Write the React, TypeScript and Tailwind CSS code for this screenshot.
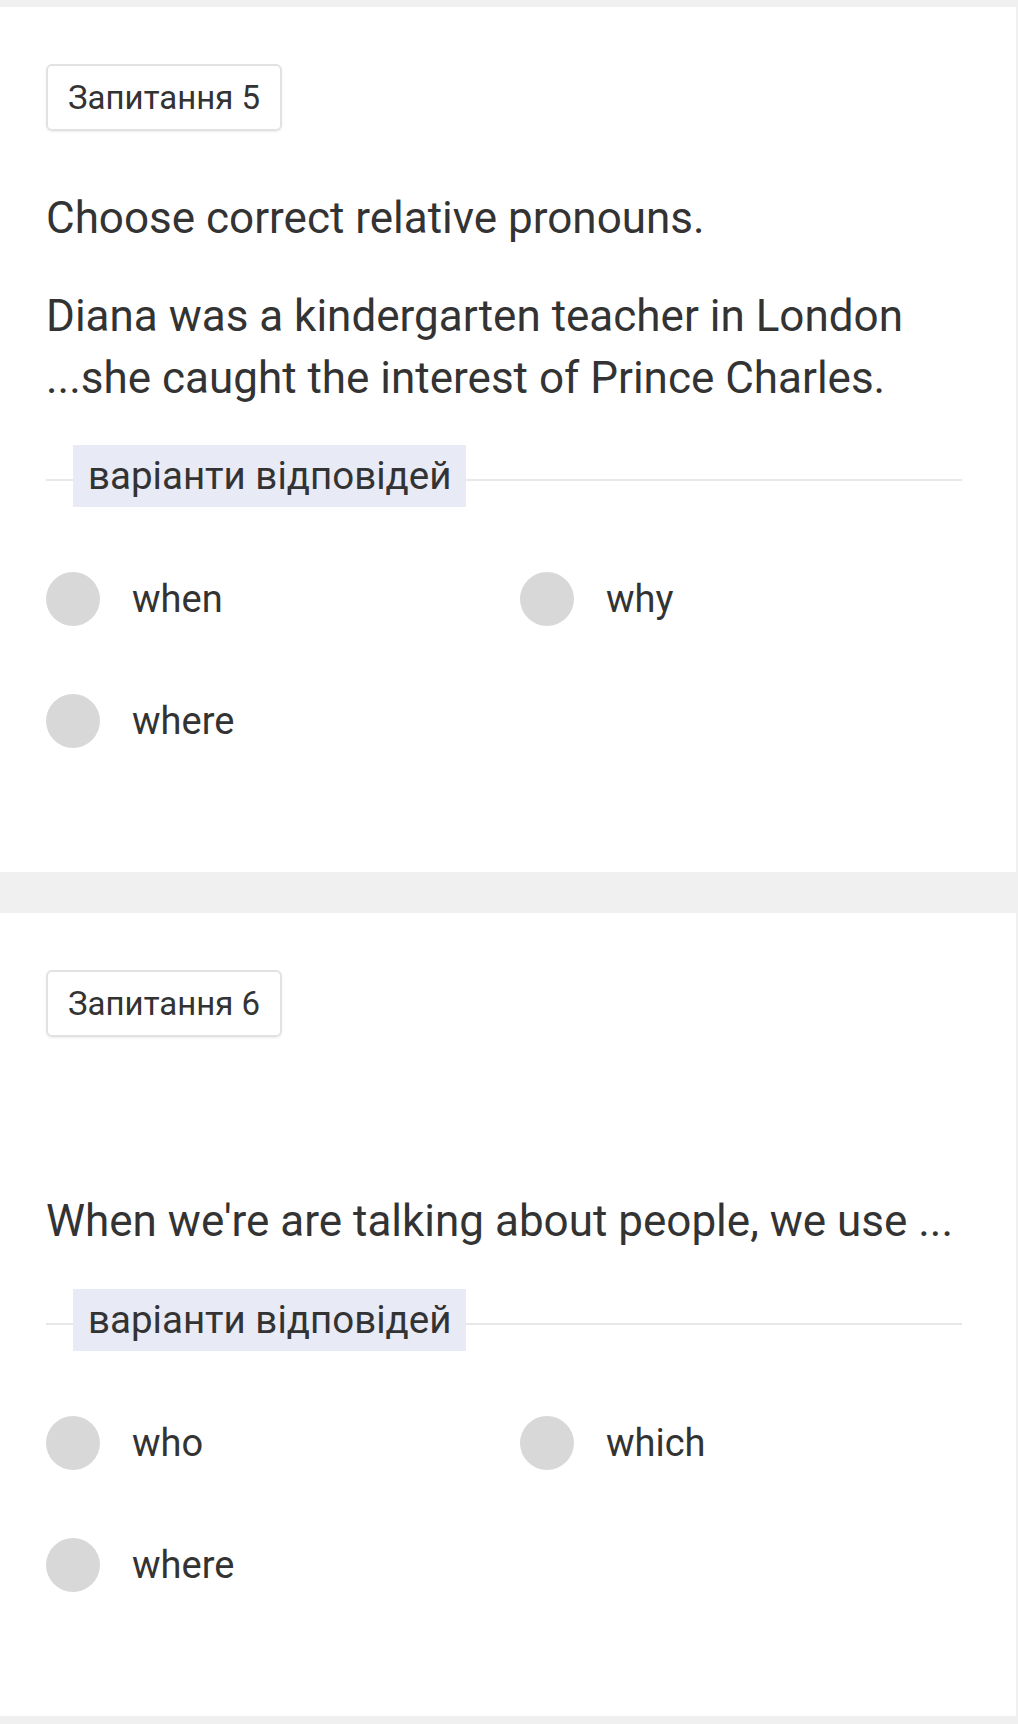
const questions = [
  {
    id: 5,
    textTop: "mt-[56px]",
    paragraphs: [
      "Choose correct relative pronouns.",
      "Diana was a kindergarten teacher in London ...she caught the interest of Prince Charles.",
    ],
    labelTop: "mt-[36px]",
    options: ["when", "why", "where"],
  },
  {
    id: 6,
    textTop: "mt-[153px]",
    paragraphs: ["When we're are talking about people, we use ..."],
    labelTop: "mt-[37px]",
    options: ["who", "which", "where"],
  },
];

function Radio({ label }: { label: string }) {
  return (
    <div className="flex h-[122px] items-center gap-[32px]">
      <span className="h-[54px] w-[54px] shrink-0 rounded-full bg-[#d8d8d8]" />
      <span className="text-[38px] text-[#333333]">{label}</span>
    </div>
  );
}

function QuestionCard({ q }: { q: (typeof questions)[number] }) {
  return (
    <section className="w-[1016px] bg-white pl-[46px] pr-[54px] pt-[57px] pb-[90px]">
      <div className="flex h-[67px] w-fit items-center rounded-[6px] border-2 border-[#e2e2e2] px-[20px] text-[33px] text-[#333333] shadow-[0_1px_2px_rgba(0,0,0,0.08)]">
        Запитання {q.id}
      </div>

      <div className={`${q.textTop} space-y-[36px] text-[44px] leading-[62px] text-[#333333]`}>
        {q.paragraphs.map((p) => (
          <p key={p}>{p}</p>
        ))}
      </div>

      <div className={`${q.labelTop} flex items-center`}>
        <div className="h-[2px] w-[27px] translate-y-[4px] bg-[#e8e8e8]" />
        <div className="flex h-[62px] items-center bg-[#e8eaf6] px-[15px] text-[38.5px] text-[#333333]">
          варіанти відповідей
        </div>
        <div className="h-[2px] flex-1 translate-y-[4px] bg-[#e8e8e8]" />
      </div>

      <div className="mt-[31px] grid grid-cols-2 gap-x-[32px]">
        {q.options.map((o) => (
          <Radio key={o} label={o} />
        ))}
      </div>
    </section>
  );
}

export default function App() {
  return (
    <div
      className="min-h-[1724px] bg-[#f0f0f0] pt-[7px]"
      style={{ fontFamily: "Roboto, 'Noto Sans', sans-serif" }}
    >
      <div className="flex flex-col gap-[41px]">
        {questions.map((q) => (
          <QuestionCard key={q.id} q={q} />
        ))}
      </div>
    </div>
  );
}
